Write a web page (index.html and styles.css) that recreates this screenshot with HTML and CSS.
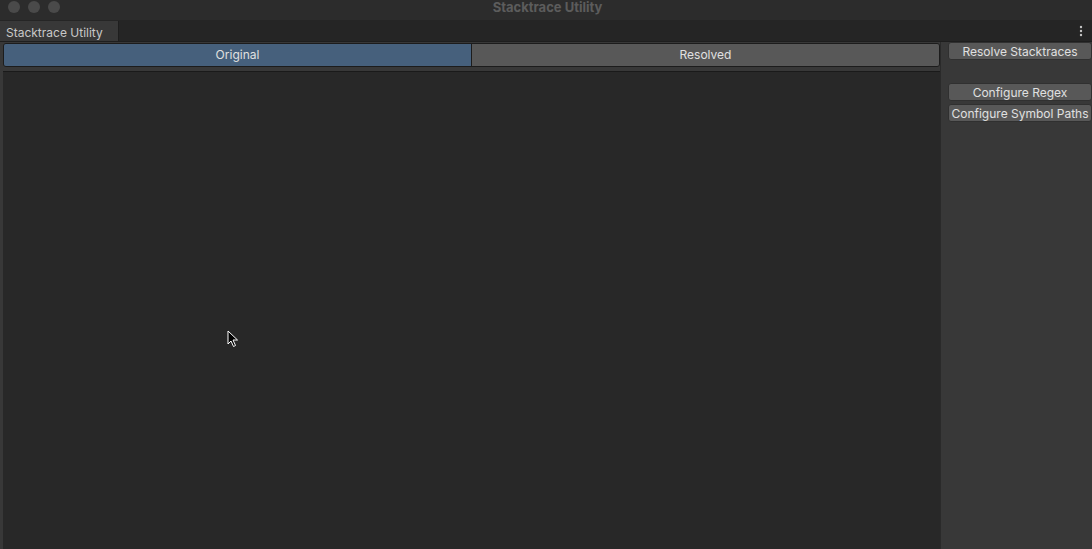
FILE: index.html
```html
<!DOCTYPE html>
<html lang="en">
  <head>
    <meta charset="UTF-8" />
    <title>Stacktrace Utility</title>
    <link rel="stylesheet" href="styles.css">
  </head>
  <body>
    <div class="titlebar">
      <div class="lights">
        <span class="light"></span>
        <span class="light"></span>
        <span class="light"></span>
      </div>
      <div class="title">Stacktrace Utility</div>
      <div></div>
    </div>
    <div class="tabstrip">
      <div class="tab">Stacktrace Utility</div>
      <div class="kebab">
        <svg width="4" height="12" viewBox="0 0 4 12"><circle cx="2" cy="2" r="1.2" fill="#c4c4c4"/><circle cx="2" cy="6" r="1.2" fill="#c4c4c4"/><circle cx="2" cy="10" r="1.2" fill="#c4c4c4"/></svg>
      </div>
    </div>
    <div class="main">
      <div class="left">
        <div class="toolbar">
          <div class="seg active">Original</div>
          <div class="seg">Resolved</div>
        </div>
        <div class="textarea"></div>
      </div>
      <div class="side">
        <button class="btn">Resolve Stacktraces</button>
        <button class="btn spaced">Configure Regex</button>
        <button class="btn">Configure Symbol Paths</button>
      </div>
    </div>

    <svg class="cursor" width="12" height="18" viewBox="0 0 12 18">
      <path d="M1 1 L1 14 L4 11 L6.5 16.5 L8.5 15.5 L6 10 L10.5 10 Z" fill="#000" stroke="#fff" stroke-width="1"/>
    </svg>
  </body>
</html>
```

FILE: styles.css
```css
body {
  margin: 0;
  width: 1092px;
  height: 549px;
  overflow: hidden;
  background-color: #383838;
  font-family: Inter, "Liberation Sans", sans-serif;
  font-size: 12px;
  color: #c4c4c4;
}
.titlebar {
  height: 20px;
  background-color: #2c2c2c;
  display: grid;
  grid-template-columns: 1fr auto 1fr;
  align-items: center;
}
.lights {
  display: flex;
  gap: 8px;
  padding-left: 8px;
  margin-top: -6px;
}
.light {
  width: 12px;
  height: 12px;
  border-radius: 50%;
  background-color: #4a4a4a;
}
.title {
  font-weight: bold;
  font-size: 13px;
  color: #5c5c5c;
  padding-left: 3px;
  margin-top: -7px;
}
.tabstrip {
  height: 21px;
  background-color: #252525;
  display: flex;
  align-items: flex-end;
  justify-content: space-between;
}
.tab {
  width: 112px;
  height: 20px;
  line-height: 23px;
  padding-left: 6px;
  background-color: #383838;
  border-right: 1px solid #1e1e1e;
  color: #c8c8c8;
}
.kebab {
  align-self: center;
  padding-right: 9px;
  display: flex;
}
.main {
  display: flex;
  height: 507px;
  border-top: 1px solid #1e1e1e;
}
.left {
  width: 937px;
  margin-left: 3px;
  display: flex;
  flex-direction: column;
}
.toolbar {
  display: flex;
  height: 22px;
  border: 1px solid #1c1c1c;
  border-radius: 3px;
  overflow: hidden;
  margin-top: 1px;
}
.seg {
  flex: 1;
  text-align: center;
  line-height: 22px;
  background-color: #585858;
  color: #e0e0e0;
}
.seg.active {
  background-color: #46607c;
  border-right: 1px solid #1c1c1c;
}
.textarea {
  flex: 1;
  margin-top: 4px;
  background-color: #282828;
  border-top: 1px solid #1a1a1a;
}
.side {
  flex: 1;
  border-left: 1px solid #2a2a2a;
  padding-left: 7px;
  display: flex;
  flex-direction: column;
  align-items: stretch;
  gap: 3px;
}
.btn {
  height: 18px;
  margin: 0;
  padding: 0;
  font-family: Inter, "Liberation Sans", sans-serif;
  font-size: 12px;
  color: #e0e0e0;
  background-color: #585858;
  border: 1px solid #303030;
  border-radius: 3px;
  text-align: center;
  white-space: nowrap;
}
.btn.spaced {
  margin-top: 20px;
}
.cursor {
  position: absolute;
  left: 227px;
  top: 330px;
}
```
